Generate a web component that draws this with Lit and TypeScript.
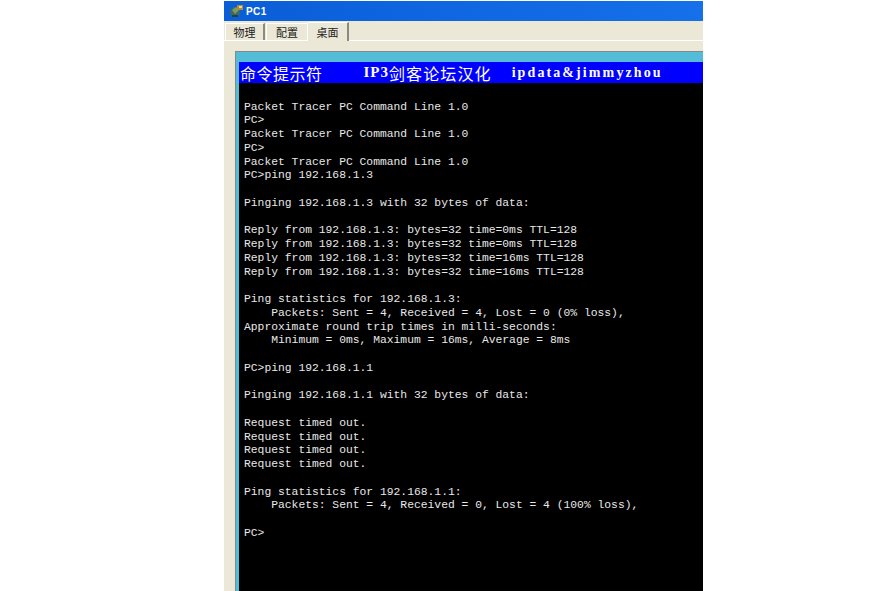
import { LitElement, html, css } from "lit";
import { customElement } from "lit/decorators.js";

const TERMINAL = `Packet Tracer PC Command Line 1.0
PC>
Packet Tracer PC Command Line 1.0
PC>
Packet Tracer PC Command Line 1.0
PC>ping 192.168.1.3

Pinging 192.168.1.3 with 32 bytes of data:

Reply from 192.168.1.3: bytes=32 time=0ms TTL=128
Reply from 192.168.1.3: bytes=32 time=0ms TTL=128
Reply from 192.168.1.3: bytes=32 time=16ms TTL=128
Reply from 192.168.1.3: bytes=32 time=16ms TTL=128

Ping statistics for 192.168.1.3:
    Packets: Sent = 4, Received = 4, Lost = 0 (0% loss),
Approximate round trip times in milli-seconds:
    Minimum = 0ms, Maximum = 16ms, Average = 8ms

PC>ping 192.168.1.1

Pinging 192.168.1.1 with 32 bytes of data:

Request timed out.
Request timed out.
Request timed out.
Request timed out.

Ping statistics for 192.168.1.1:
    Packets: Sent = 4, Received = 0, Lost = 4 (100% loss),

PC>`;

@customElement("app-root")
export class AppRoot extends LitElement {
  static styles = css`
    :host {
      display: block;
      width: 893px;
      height: 591px;
      overflow: hidden;
      background: #fff;
    }
    .window {
      width: 479px;
      height: 590px;
      margin: 1px 0 0 224px;
      display: flex;
      flex-direction: column;
      background: #ebe8d8;
      overflow: hidden;
    }
    .title {
      height: 20px;
      flex: none;
      display: flex;
      align-items: center;
      gap: 1px;
      padding-left: 5px;
      background: linear-gradient(90deg, #0a5ed8 0%, #1570ea 100%);
      color: #fff;
      font: bold 10px "Liberation Sans", sans-serif;
    }
    .title span { letter-spacing: 0.4px; }
    .tabs {
      height: 19px;
      flex: none;
      display: flex;
      align-items: flex-end;
      padding-left: 1px;
      border-bottom: 1px solid #fff;
      box-sizing: content-box;
      font: 11px "Noto Sans CJK SC", sans-serif;
      color: #222;
    }
    .tab {
      height: 17px;
      display: flex;
      align-items: center;
      justify-content: center;
      box-sizing: border-box;
      border-top: 1px solid #fff;
      border-left: 1px solid #fff;
      border-right: 2px solid #8a8a80;
    }
    .tab.a { width: 40px; }
    .tab.b { width: 42px; margin-left: 1px; border-right: 1px solid #fff; }
    .tab.c {
      width: 41px;
      height: 19px;
      border-left: none;
      margin-bottom: -1px;
      background: #ebe8d8;
    }
    .body {
      flex: 1;
      min-height: 0;
      padding: 10px 0 0 11px;
    }
    .panel {
      height: 100%;
      box-sizing: border-box;
      border-top: 1px solid #7f8a8c;
      border-left: 1px solid #7f8a8c;
      background: #54bcd6;
      padding: 10px 0 0 3px;
      display: flex;
      flex-direction: column;
    }
    .banner {
      height: 21px;
      flex: none;
      display: flex;
      align-items: center;
      padding-left: 1px;
      background: #0000ff;
      color: #fff;
      font: bold 15px "Liberation Serif", "Noto Sans CJK SC", serif;
      white-space: pre;
    }
    .zh { font: 16px "Noto Sans CJK SC", sans-serif; letter-spacing: 0.5px; }
    .zh.wide { letter-spacing: 1.1px; }
    .ip { margin-left: 41px; letter-spacing: 1px; }
    .site { margin-left: 20px; letter-spacing: 2.1px; font-size: 14px; }
    .term {
      flex: 1;
      margin: 0;
      padding: 17.6px 0 0 5px;
      background: #000;
      color: #e8e8e8;
      font: 11.33px/13.75px "Liberation Mono", monospace;
      white-space: pre;
      overflow: hidden;
    }
  `;

  render() {
    return html`<div class="window">
      <div class="title">
        <svg width="16" height="14" viewBox="0 0 16 14">
          <circle cx="6" cy="8" r="5" fill="#3c6a5e" />
          <path d="M3 6 L7 3 L10 6 L6 10 Z" fill="#7f9a5c" />
          <rect x="8" y="1" width="6" height="5" fill="#b08a3c" />
          <rect x="10" y="2" width="3" height="2" fill="#e8d890" />
          <rect x="3" y="11" width="6" height="2" fill="#26403c" />
        </svg>
        <span>PC1</span>
      </div>
      <div class="tabs">
        <div class="tab a">物理</div>
        <div class="tab b">配置</div>
        <div class="tab c">桌面</div>
      </div>
      <div class="body">
        <div class="panel">
          <div class="banner"><span class="zh">命令提示符</span><span class="ip">IP3</span><span class="zh wide">剑客论坛汉化</span><span class="site">ipdata&amp;jimmyzhou</span></div>
          <pre class="term">${TERMINAL}</pre>
        </div>
      </div>
    </div>`;
  }
}
